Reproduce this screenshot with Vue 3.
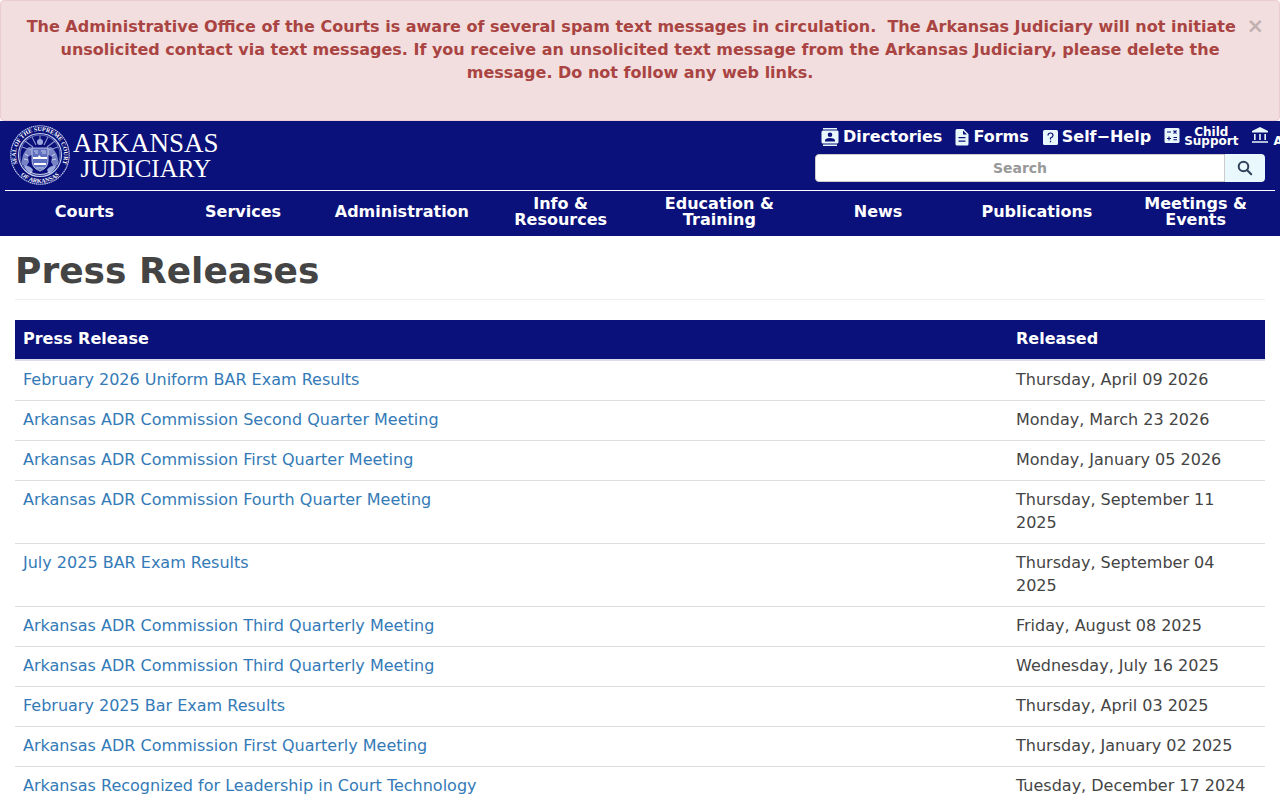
<template>
  <div class="page">
    <div class="alert" role="alert">
      <button type="button" class="close" aria-label="Close">×</button>
      <p>
        The Administrative Office of the Courts is aware of several spam text messages in circulation.&nbsp; The Arkansas
        Judiciary will not initiate unsolicited contact via text messages. If you receive an unsolicited text message
        from the Arkansas Judiciary, please delete the message. Do not follow any web links.
      </p>
    </div>

    <header class="site-header">
      <div class="header-top">
        <a href="#" class="brand">
          <svg class="seal" viewBox="0 0 60 60" aria-hidden="true">
            <defs>
              <path id="arc-top" d="M9.200 42A24 24 0 1 1 50.800 42" />
              <path id="arc-bottom" d="M10 49.500A28 28 0 0 0 50 49.500" />
            </defs>
            <g fill="none" stroke="#c3cdf0">
              <circle cx="30" cy="30" r="29.200" stroke-width="1.100" stroke-dasharray="1.600 .500" />
              <circle cx="30" cy="30" r="21.500" stroke-width="1.200" />
              <circle cx="30" cy="30" r="20" stroke-width=".500" />
              <path stroke-width="1.100" opacity=".700" d="M30 20V10.500M26 20l-4-8M34 20l4-8M23 22l-8-6M37 22l8-6M21 25l-9-3M39 25l9-3" />
            </g>
            <g fill="#9aa8dc">
              <path d="M19 22q-8 6-7 17l4 3 3-5-1-5 5-3 2-6zM41 22q8 6 7 17l-4 3-3-5 1-5-5-3-2-6z" opacity=".750" />
              <circle cx="30" cy="17" r="3" />
              <path d="M22 23h16v13q0 7-8 10-8-3-8-10z" fill="#5e6fbf" stroke="#d5dcf5" stroke-width=".800" />
              <path d="M14 40q7 1 9 5l-2 4q-6-3-7-9zM46 40q-7 1-9 5l2 4q6-3 7-9z" />
            </g>
            <path d="M23 32h5l1-2 2 2h6v2H23zM24 38h12v2H24z" fill="#fff" />
            <path
              d="M24 26h4m3 0h5M25 28h3m4 0h4M15 29l3 2m-4 3 4 1m27-6-3 2m4 3-4 1M26 43h8M20 47q10 5 20 0"
              fill="none"
              stroke="#e6eafa"
              stroke-width=".800"
            />
            <text class="seal-text"><textPath href="#arc-top" startOffset="50%">SEAL OF THE SUPREME COURT</textPath></text>
            <text class="seal-text"><textPath href="#arc-bottom" startOffset="50%">OF ARKANSAS</textPath></text>
          </svg>
          <span class="brand-name">
            <span>ARKANSAS</span>
            <span class="brand-second">JUDICIARY</span>
          </span>
        </a>

        <div class="tools">
          <nav class="quick-links" aria-label="Quick links">
            <a v-for="link in quickLinks" :key="link.icon" href="#" :class="{ small: link.small }">
              <svg v-if="link.icon === 'contacts'" class="icon" viewBox="0 0 18 18">
                <path d="M2 0h14v1.500H2zM2 16.500h14V18H2z" />
                <path
                  fill-rule="evenodd"
                  d="M1.500 2.500h15Q17.500 2.500 17.500 4v10q0 1.500-1.500 1.500H2Q.5 15.500.5 14V4Q.5 2.500 2 2.500zM9 4.500a2.300 2.300 0 1 0 0 4.600 2.300 2.300 0 0 0 0-4.600zM4 13.500h10v-1q0-2.500-5-2.500t-5 2.500z"
                />
              </svg>
              <svg v-else-if="link.icon === 'form'" class="icon form" viewBox="0 0 14 18">
                <path
                  fill-rule="evenodd"
                  d="M2 1h6.500L13.500 6V16q0 1.500-1.500 1.500H2Q.5 17.500.5 16V2.500Q.5 1 2 1zM8 2.500V6.500h4zM3.500 9v1.300h7V9zm0 3.500v1.300h7v-1.300z"
                />
              </svg>
              <svg v-else-if="link.icon === 'help'" class="icon help" viewBox="0 0 16 18">
                <rect x="1" y="2" width="15" height="15" rx="1.500" />
                <path d="M6 7.500Q6 5 8.500 5T11 7.500Q11 9 8.500 10v1.500M8.500 12.700v1.500" fill="none" stroke="#0a117a" stroke-width="1.200" />
              </svg>
              <svg v-else-if="link.icon === 'calculator'" class="icon help raised" viewBox="0 0 16 18">
                <rect x=".5" y="2" width="15" height="15" rx="1.500" />
                <path
                  d="M3 6h4M9.500 4.500l3 3m0-3-3 3M3 12.500h4m-2-2v4M9.500 11.500h3.500M9.500 13.700h3.500"
                  fill="none"
                  stroke="#0a117a"
                  stroke-width="1.100"
                />
              </svg>
              <svg v-else class="icon raised" viewBox="0 0 18 18">
                <path d="M9 1 1 5v1.500h16V5zM3 8h1.600v6H3zM8.200 8h1.600v6H8.200zM13.400 8H15v6h-1.600zM1 15.200h16v1.500H1z" />
              </svg>
              <span>{{ link.label }}</span>
            </a>
          </nav>
          <form class="search" role="search" @submit.prevent>
            <input v-model="query" type="text" placeholder="Search" aria-label="Search">
            <button type="submit" aria-label="Search">
              <svg viewBox="0 0 16 16"><circle cx="6.500" cy="6.500" r="4.800" /><path d="m10.200 10.200 4 4" /></svg>
            </button>
          </form>
        </div>
      </div>

      <nav class="main-nav" aria-label="Main">
        <a v-for="item in navItems" :key="item" href="#"><span>{{ item }}</span></a>
      </nav>
    </header>

    <main class="content">
      <h1>Press Releases</h1>
      <table>
        <thead>
          <tr>
            <th scope="col">Press Release</th>
            <th scope="col" class="released">Released</th>
          </tr>
        </thead>
        <tbody>
          <tr v-for="release in releases" :key="release.date">
            <td><a href="#">{{ release.title }}</a></td>
            <td>{{ release.date }}</td>
          </tr>
        </tbody>
      </table>
    </main>
  </div>
</template>

<script setup>
import { ref } from 'vue';

const query = ref('');

const quickLinks = [
  { icon: 'contacts', label: 'Directories' },
  { icon: 'form', label: 'Forms' },
  { icon: 'help', label: 'Self−Help' },
  { icon: 'calculator', label: 'Child\nSupport', small: true },
  { icon: 'court', label: '\nA', small: true }
];

const navItems = [
  'Courts',
  'Services',
  'Administration',
  'Info &\nResources',
  'Education &\nTraining',
  'News',
  'Publications',
  'Meetings &\nEvents'
];

const releases = [
  { title: 'February 2026 Uniform BAR Exam Results', date: 'Thursday, April 09 2026' },
  { title: 'Arkansas ADR Commission Second Quarter Meeting', date: 'Monday, March 23 2026' },
  { title: 'Arkansas ADR Commission First Quarter Meeting', date: 'Monday, January 05 2026' },
  { title: 'Arkansas ADR Commission Fourth Quarter Meeting', date: 'Thursday, September 11 2025' },
  { title: 'July 2025 BAR Exam Results', date: 'Thursday, September 04 2025' },
  { title: 'Arkansas ADR Commission Third Quarterly Meeting', date: 'Friday, August 08 2025' },
  { title: 'Arkansas ADR Commission Third Quarterly Meeting', date: 'Wednesday, July 16 2025' },
  { title: 'February 2025 Bar Exam Results', date: 'Thursday, April 03 2025' },
  { title: 'Arkansas ADR Commission First Quarterly Meeting', date: 'Thursday, January 02 2025' },
  { title: 'Arkansas Recognized for Leadership in Court Technology', date: 'Tuesday, December 17 2024' }
];
</script>

<style>
body {
  margin: 0;
  background: #fff;
}
</style>

<style scoped>
* {
  box-sizing: border-box;
}

.page {
  overflow-x: hidden;
  color: #444;
  font: 16px/23px "DejaVu Sans", sans-serif;
}

.alert {
  padding: 14px 15px 36px;
  border: 1px solid #ebccd1;
  border-radius: 4px;
  background: #f2dede;
  color: #a94442;
  font-weight: bold;
  text-align: center;
}

.alert p {
  margin: 0;
}

.close {
  float: right;
  padding: 0;
  border: 0;
  background: none;
  color: #000;
  font: bold 21px/23px "DejaVu Sans", sans-serif;
  opacity: 0.2;
  cursor: pointer;
}

.site-header {
  background: #0a117a;
  color: #fff;
  font-weight: bold;
}

.site-header a {
  color: #fff;
  text-decoration: none;
}

.header-top {
  display: flex;
  justify-content: space-between;
  height: 70px;
  margin: 0 5px;
  padding: 4px 10px 0 5px;
  border-bottom: 1px solid #fff;
}

.brand {
  display: flex;
  align-items: flex-start;
  gap: 3px;
}

.seal {
  width: 60px;
  height: 60px;
}

.seal-text {
  fill: #fff;
  font: bold 6px "Liberation Serif", serif;
  text-anchor: middle;
}

.brand-name {
  display: flex;
  flex-direction: column;
  align-items: center;
  padding-top: 5px;
  font: 27px/26px "Liberation Serif", serif;
}

.brand-second {
  font-size: 25px;
}

.tools {
  width: 450px;
}

.quick-links {
  display: flex;
  gap: 13px;
  height: 29px;
  padding: 3px 0 0 6px;
  white-space: pre;
}

.quick-links a {
  display: flex;
  flex-shrink: 0;
  align-items: center;
  gap: 4px;
  height: 18px;
  line-height: 18px;
}

.quick-links .small {
  font-size: 12px;
  line-height: 9px;
  text-align: center;
}

.icon {
  width: 18px;
  height: 18px;
  fill: #e8f7fc;
}

.icon.form {
  width: 14px;
}

.icon.help {
  width: 16px;
}

.icon.raised {
  margin-bottom: 4px;
}

.search {
  display: flex;
  height: 28px;
}

.search input {
  flex: 1;
  min-width: 0;
  padding: 0 12px;
  border: 1px solid #ccc;
  border-radius: 4px 0 0 4px;
  color: #444;
  font: bold 14px "DejaVu Sans", sans-serif;
  text-align: center;
}

.search input::placeholder {
  color: #999;
}

.search button {
  display: flex;
  align-items: center;
  justify-content: center;
  width: 40px;
  padding: 0;
  border: 0;
  border-radius: 0 4px 4px 0;
  background: #e8f8fc;
  cursor: pointer;
}

.search svg {
  width: 16px;
  height: 16px;
  fill: none;
  stroke: #2f4157;
  stroke-width: 2;
  stroke-linecap: round;
}

.main-nav {
  display: grid;
  grid-template-columns: repeat(8, 1fr);
  min-height: 45px;
  padding: 0 5px 4px;
  line-height: 16px;
  text-align: center;
  white-space: pre-line;
}

.main-nav a {
  display: flex;
  align-items: center;
  justify-content: center;
}

.content {
  padding: 15px 15px 0;
}

h1 {
  margin: 0 0 20px;
  padding-bottom: 8px;
  border-bottom: 1px solid #eee;
  font-size: 36px;
  line-height: 40px;
}

table {
  width: 100%;
  border-collapse: separate;
  border-spacing: 0;
  table-layout: fixed;
}

th,
td {
  padding: 7px 8px 9px;
  text-align: left;
  vertical-align: top;
}

th {
  border-bottom: 2px solid #dde;
  background: #0a117a;
  background-clip: padding-box;
  color: #fff;
}

.released {
  width: 257px;
}

td {
  border-bottom: 1px solid #ddd;
}

td a {
  color: #337ab7;
  text-decoration: none;
}
</style>
